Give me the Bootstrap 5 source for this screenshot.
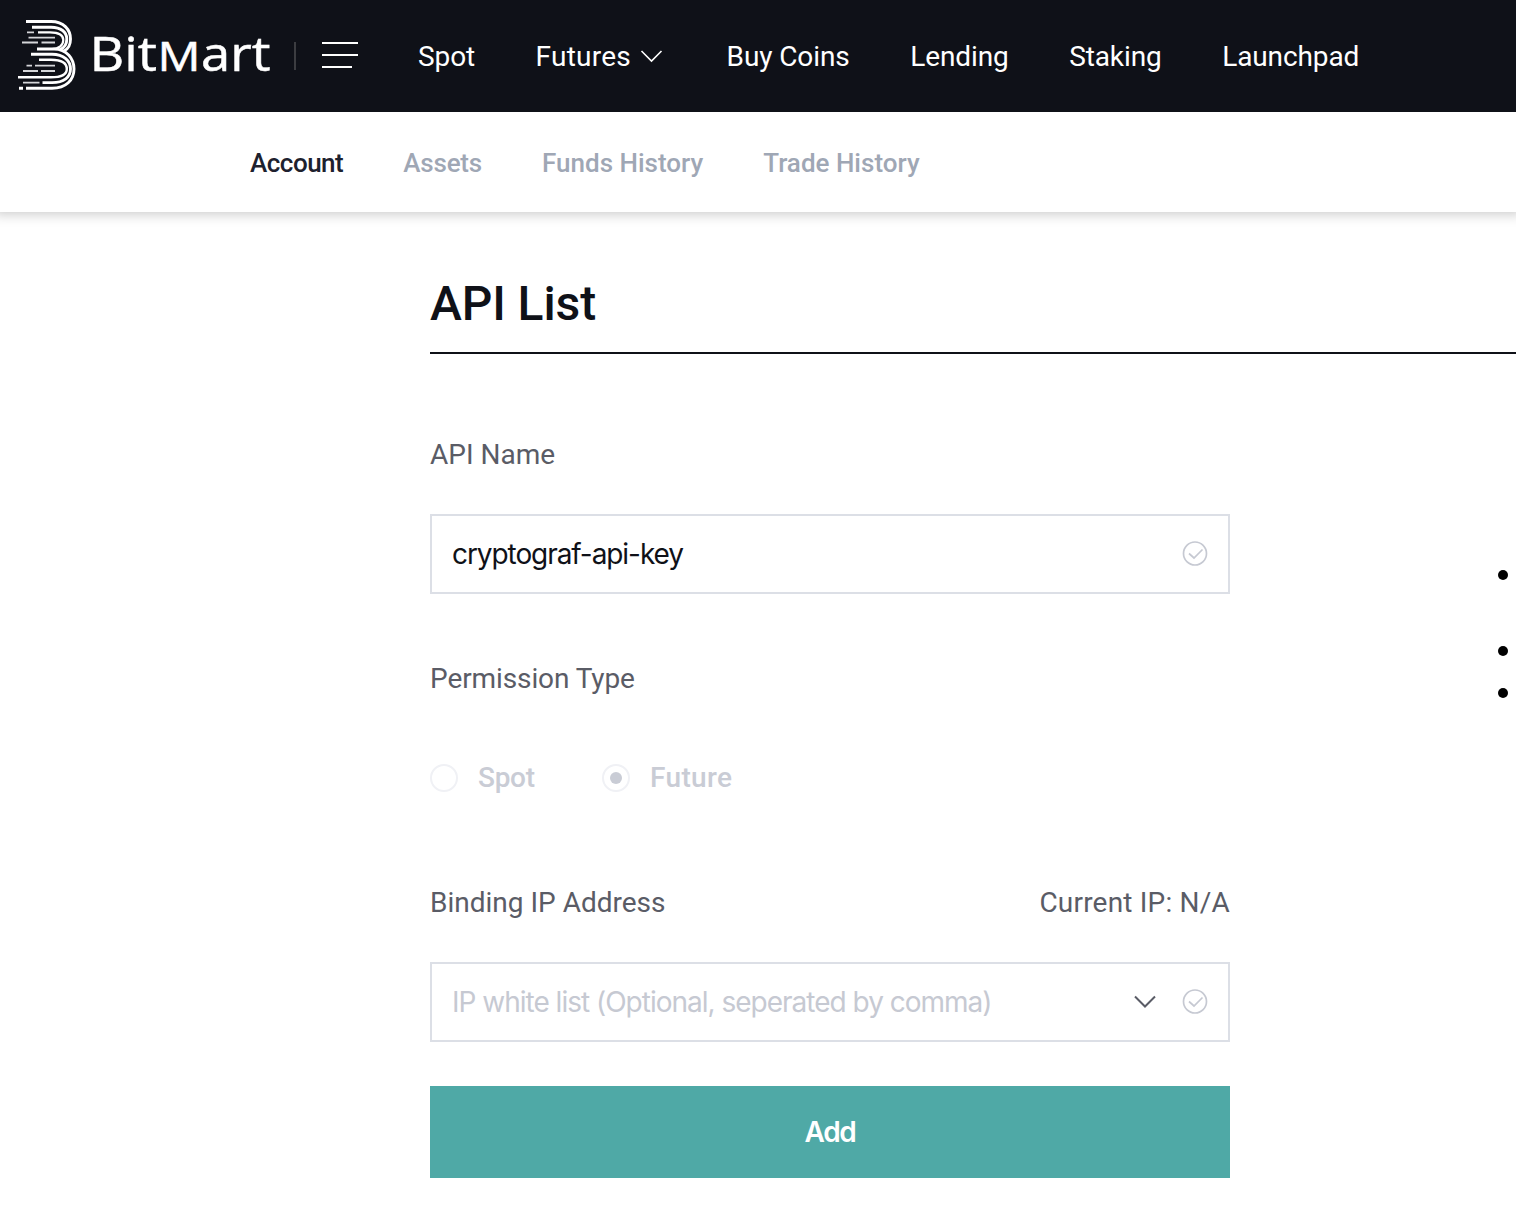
<!DOCTYPE html>
<html lang="en">
<head>
<meta charset="utf-8">
<meta name="viewport" content="width=device-width, initial-scale=1">
<title>BitMart - API List</title>
<link href="https://cdn.jsdelivr.net/npm/bootstrap@5.3.0/dist/css/bootstrap.min.css" rel="stylesheet">
<style>
body{font-family:Roboto,"Liberation Sans",sans-serif;font-size:28px;line-height:40px;color:#0f1118;min-height:1226px;overflow-x:hidden}
svg{display:block;flex:none}
.topbar{height:112px;background:#0f1118;padding:0 0 0 18px}
.brand-sep{width:2px;height:28px;background:#3c3d41;margin:0 26px 0 24px}
.topbar .nav-link,.subbar .nav-link{padding:0;white-space:nowrap}
.main-links{margin-left:60px;gap:60.5px;padding-top:2px}
.main-links .nav-link,.main-links .nav-link:hover{color:#fff;letter-spacing:-.1px}
.main-links .has-menu span{letter-spacing:.25px}
.menu-arrow{margin:0 3px 0 8px}
.subbar{height:100px;padding:2px 0 0 250px;gap:60px;box-shadow:0 -4px 12px 6px rgba(0,0,0,.22);font-size:26px;font-weight:500}
.subbar .nav-link{color:#9fa7b5}
.subbar .nav-link.active{color:#1d212e;letter-spacing:-.5px}
.subbar .tight{letter-spacing:-.2px}
.page-body{padding-left:430px}
.page-title{height:142px;border-bottom:2px solid #0f1118;font-size:48px;font-weight:500;line-height:60px;padding-top:62px;letter-spacing:-.1px}
.api-form{width:800px;padding-top:80px}
.field-label{color:#5a5c66;height:40px;line-height:42px;margin-bottom:40px}
.type-label{margin:64px 0 60px;letter-spacing:-.1px}
.ip-label{margin-top:84px}
.ip-label span{letter-spacing:.2px}
.field-box{height:80px;border:2px solid #dcdfe6;padding:0 20px}
.field-box .form-control{font-family:Inter,"Liberation Sans",sans-serif;font-size:28px;letter-spacing:-1.07px;padding:0;border:0;border-radius:0;color:#0f1118;background:none;box-shadow:none;height:76px}
.field-box .form-control::placeholder{color:#c6c9d2;opacity:1;letter-spacing:-1px}
.list-arrow{margin-right:26px}
.radio-row{height:40px;line-height:42px;color:#c9ccd5;font-weight:500}
.ring{width:28px;height:28px;border:2px solid #f0f1f5;border-radius:50%;margin-right:20px}
.ring i{width:12px;height:12px;border-radius:50%;background:#c9ccd5}
.first-choice{width:124px;letter-spacing:-.3px}
.second-choice{letter-spacing:.35px}
.btn-add,.btn-add:hover{height:92px;background:#4fa9a6;color:#fff;border:0;border-radius:0;font-family:Inter,sans-serif;font-weight:600;font-size:28px;letter-spacing:-1.3px;margin-top:44px}
.tips{width:18px;padding-top:216px}
.tips li{width:10px;height:10px;border-radius:50%;background:#000}
.tips li:nth-child(2){margin-top:66px}
.tips li:nth-child(3){margin-top:32px}
</style>
<script src="https://cdn.jsdelivr.net/npm/bootstrap@5.3.0/dist/js/bootstrap.bundle.min.js"></script>
</head>
<body>
<header class="topbar d-flex align-items-center position-relative">
  <a href="#" aria-label="BitMart">
  <svg width="252" height="112" viewBox="18 0 252 112">
    <g fill="none" stroke="#fff" stroke-width="2.900">
      <path d="M26 21.500H51C64 21.500 70.500 30 70.500 39C70.500 45 68 49 64 51"/>
      <path d="M32 27.300H51C61 27.300 66.800 32 66.800 39C66.800 44 64 48 60 49.500"/>
      <path stroke-width="2.200" d="M38 32.300H50C58 32.300 63.300 35 63.300 40C63.300 45 59 49 52 49"/>
      <path d="M37 49H54C67 49 74 59 74 69C74 80 66 88.300 52 88.300H26M19 88.300H23"/>
      <path d="M31 54.300H52C64 54.300 70.500 61 70.500 69C70.500 77 64 82.600 52 82.600H42.500"/>
      <path stroke-width="2.400" d="M39 59.700H51C61 59.700 66.800 63 66.800 69C66.800 75 61 77.300 51 77.300H18"/>
      <path stroke-width="1.800" stroke="#d5d6d9" d="M27 32.300H34M28.500 37.700H55M22 42.500H38M41.500 42.500H55M26.500 65.700H32M35 65.700H55M23 71H38M41 71H55M23 82.600H39.500"/>
    </g>
    <g fill="#fff" stroke="#fff" stroke-width=".5" font-family="Open Sans, sans-serif">
      <text x="89.500" y="71" font-size="47.500" textLength="67.500" lengthAdjust="spacingAndGlyphs">Bit</text>
      <text x="157.500" y="71" font-size="39.500" textLength="43" lengthAdjust="spacingAndGlyphs">M</text>
      <text x="201" y="71" font-size="47.500" textLength="69.500" lengthAdjust="spacingAndGlyphs">art</text>
    </g>
  </svg></a>
  <span class="brand-sep"></span>
  <svg width="36" height="28" viewBox="0 0 36 28"><path stroke="#fff" stroke-width="2" d="M0 1H36M0 13H36M0 25H30"/></svg>
  <nav class="nav main-links flex-nowrap">
    <a class="nav-link" href="#">Spot</a>
    <a class="nav-link has-menu d-flex align-items-center" href="#"><span>Futures</span>
      <svg class="menu-arrow" width="24" height="14" viewBox="0 0 24 14"><path fill="none" stroke="#fff" stroke-width="1.600" d="M2.500 1L12.500 11L22.500 1"/></svg></a>
    <a class="nav-link" href="#">Buy Coins</a>
    <a class="nav-link" href="#">Lending</a>
    <a class="nav-link" href="#">Staking</a>
    <a class="nav-link" href="#">Launchpad</a>
  </nav>
</header>
<nav class="nav subbar flex-nowrap align-items-center bg-white">
  <a class="nav-link active" href="#">Account</a>
  <a class="nav-link tight" href="#">Assets</a>
  <a class="nav-link" href="#">Funds History</a>
  <a class="nav-link" href="#">Trade History</a>
</nav>
<main class="page-body">
  <h1 class="page-title mb-0"><span>API List</span></h1>
  <div class="d-flex justify-content-between">
    <form class="api-form">
      <div class="field-label"><label for="apiName">API Name</label></div>
      <div class="field-box d-flex align-items-center">
        <input id="apiName" class="form-control" type="text" value="cryptograf-api-key">
        <svg width="26" height="26" viewBox="0 0 26 26" fill="none" stroke="#c6c9d2" stroke-width="1.700"><circle cx="13" cy="12.500" r="11.500"/><path d="M7 12.500L12 17L20.500 8.500"/></svg>
      </div>
      <div class="field-label type-label"><span>Permission Type</span></div>
      <div class="radio-row d-flex align-items-center">
        <span class="ring"></span><span class="first-choice">Spot</span>
        <span class="ring d-flex align-items-center justify-content-center"><i></i></span><span class="second-choice">Future</span>
      </div>
      <div class="field-label ip-label d-flex justify-content-between"><label for="ip">Binding IP Address</label><span>Current IP: N/A</span></div>
      <div class="field-box d-flex align-items-center">
        <input id="ip" class="form-control" type="text" placeholder="IP white list (Optional, seperated by comma)">
        <svg class="list-arrow" width="24" height="14" viewBox="0 0 24 14"><path fill="none" stroke="#5a5c66" stroke-width="2" d="M3 1.500L13 11.500L23 1.500"/></svg>
        <svg width="26" height="26" viewBox="0 0 26 26" fill="none" stroke="#c6c9d2" stroke-width="1.700"><circle cx="13" cy="12.500" r="11.500"/><path d="M7 12.500L12 17L20.500 8.500"/></svg>
      </div>
      <button type="button" class="btn btn-add w-100">Add</button>
    </form>
    <ul class="tips list-unstyled mb-0"><li></li><li></li><li></li></ul>
  </div>
</main>
</body>
</html>
